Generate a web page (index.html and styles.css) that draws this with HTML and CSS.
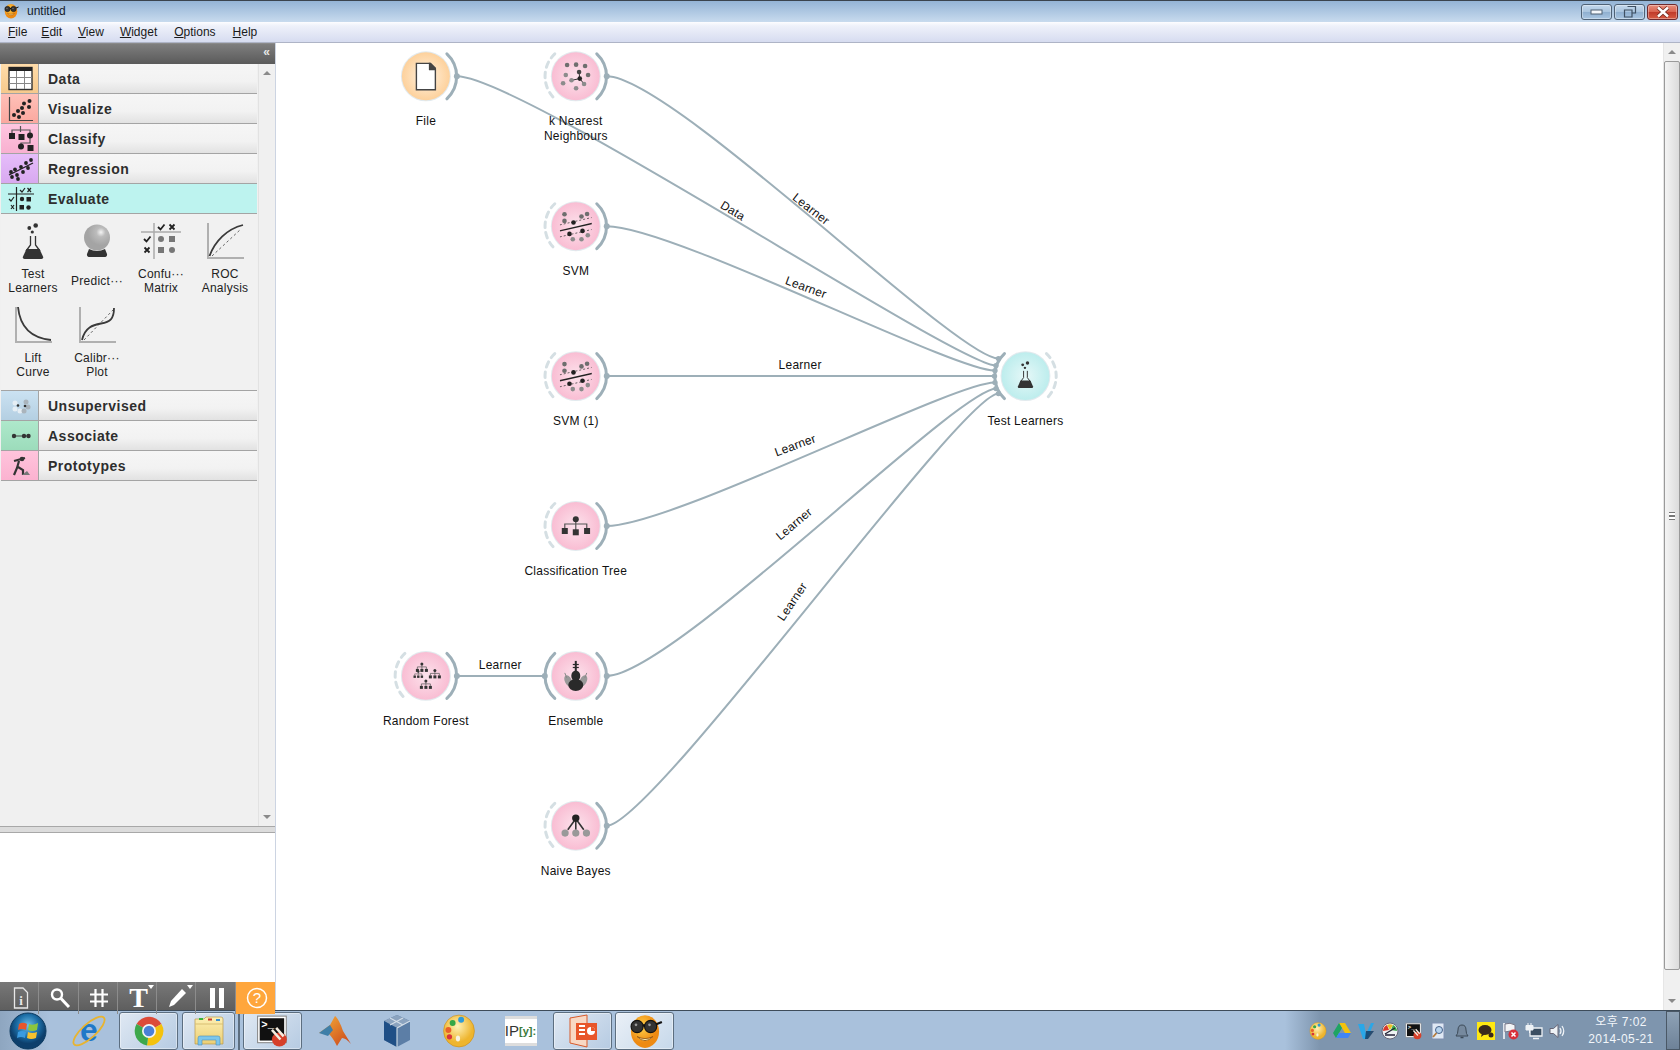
FILE: index.html
```html
<!DOCTYPE html>
<html>
<head>
<meta charset="utf-8" />
<title>untitled</title>
<link rel="stylesheet" href="styles.css">
</head>
<body>

<!-- shared gradients and glyphs -->
<svg class="defs" width="0" height="0">
	<defs>
		<radialGradient id="pink"><stop offset="0" stop-color="#fce3ec"/><stop offset="1" stop-color="#f9bdd3"/></radialGradient>
		<radialGradient id="peach"><stop offset="0" stop-color="#fff3e2"/><stop offset="1" stop-color="#fdd19c"/></radialGradient>
		<radialGradient id="teal"><stop offset="0" stop-color="#e6f8f8"/><stop offset="1" stop-color="#bdeded"/></radialGradient>
		<radialGradient id="ball" cx=".65" cy=".3"><stop offset="0" stop-color="#f4f4f4"/><stop offset=".35" stop-color="#bcbcbc"/><stop offset="1" stop-color="#a4a4a4"/></radialGradient>
		<radialGradient id="orb" cx=".5" cy=".35"><stop offset="0" stop-color="#6fc0ea"/><stop offset=".6" stop-color="#1c6fa8"/><stop offset="1" stop-color="#0d3f6c"/></radialGradient>
		<radialGradient id="sun" cx=".4" cy=".35"><stop offset="0" stop-color="#ffd24a"/><stop offset="1" stop-color="#ee8a12"/></radialGradient>
		<radialGradient id="cream" cx=".45" cy=".35"><stop offset="0" stop-color="#fff2b8"/><stop offset="1" stop-color="#eeb52e"/></radialGradient>
		<linearGradient id="folder" x1="0" y1="0" x2="0" y2="1"><stop offset="0" stop-color="#fdf0b4"/><stop offset="1" stop-color="#eccf74"/></linearGradient>
		<linearGradient id="peak" x1="0" y1="0" x2="1" y2="1"><stop offset="0" stop-color="#f6b33a"/><stop offset="1" stop-color="#c9421a"/></linearGradient>

		<path id="arc-out" d="M21 -22.5A30.8 30.8 0 0 1 21 22.5"/>
		<path id="arc-in" d="M-21 -22.5A30.8 30.8 0 0 0 -21 22.5"/>

		<symbol id="i-flask" viewBox="0 0 40 40">
			<circle cx="22.7" cy="2.5" r="2.3" fill="#333"/><circle cx="16.3" cy="5" r="1.9" fill="#333"/><circle cx="19.3" cy="9" r="1.6" fill="#333"/>
			<path d="M17.5 13V22L13 28M22.5 13V22L27 28" fill="none" stroke="#333" stroke-width="1.3"/>
			<path d="M13.5 26H26.500L30 33.500Q30.800 36 28.500 36H11.500Q9.200 36 10 33.500Z" fill="#333"/>
		</symbol>
		<symbol id="i-ball" viewBox="0 0 40 40">
			<circle cx="20" cy="14.500" r="13" fill="url(#ball)"/>
			<path d="M12 26Q20 30 28 26L30 31Q30.500 34 27 34H13Q9.500 34 10 31Z" fill="#333"/>
		</symbol>
		<symbol id="i-confusion" viewBox="0 0 42 40">
			<path d="M14 0V36M1 9H41" stroke="#aaa" stroke-width="1.500"/>
			<path d="M18 4L20.500 6.500L24.500 1.500M4 16L6.500 18.500L10.500 13.500" fill="none" stroke="#222" stroke-width="1.800"/>
			<path d="M29.500 1.500L34.500 6.500M34.500 1.500L29.500 6.500M4.500 24.500L9.500 29.500M9.500 24.500L4.500 29.500" stroke="#222" stroke-width="1.800"/>
			<circle cx="21" cy="16" r="3" fill="#777"/><rect x="29" y="13" width="6" height="6" fill="#777"/>
			<rect x="18" y="24" width="6" height="6" fill="#777"/><circle cx="32" cy="27" r="3" fill="#777"/>
		</symbol>
		<symbol id="i-roc" viewBox="0 0 40 40">
			<path d="M3 0V35H39" fill="none" stroke="#b0b0b0" stroke-width="2"/>
			<path d="M7 33L36 6" stroke="#666" stroke-dasharray="2.500 2.500"/>
			<path d="M4.500 33C10 18 22 6 38 2" fill="none" stroke="#3a3a3a" stroke-width="1.800"/>
		</symbol>
		<symbol id="i-lift" viewBox="0 0 40 40">
			<path d="M3 0V35H39" fill="none" stroke="#b0b0b0" stroke-width="2"/>
			<path d="M5 0C7 20 18 31 38 33" fill="none" stroke="#3a3a3a" stroke-width="1.800"/>
		</symbol>
		<symbol id="i-calib" viewBox="0 0 40 40">
			<path d="M3 0V35H39" fill="none" stroke="#b0b0b0" stroke-width="2"/>
			<path d="M7 33L36 3" stroke="#666" stroke-dasharray="2.500 2.500"/>
			<path d="M5 33C8 20 16 18 24 16.500C33 15 37 12 37 1" fill="none" stroke="#3a3a3a" stroke-width="1.800"/>
		</symbol>

		<symbol id="n-doc" viewBox="-16 -16 32 32">
			<path d="M-9.500 -13H4L9.500 -7.500V13.500H-9.500Z" fill="#fff" stroke="#444" stroke-width="1.400"/>
			<path d="M3 -13.500H5L10 -8.500V-6H3Z" fill="#444"/>
		</symbol>
		<symbol id="n-knn" viewBox="-16 -16 32 32">
			<path d="M4 2.300L3.300 -4.300M4 2.300L-4.300 4M4 2.300L8.300 7.700" stroke="#333"/>
			<g fill="#6e6e6e"><circle cx="-8.700" cy="-11.300" r="2.300"/><circle cx=".3" cy="-11.700" r="2.300"/><circle cx="9.300" cy="-10.300" r="2.300"/><circle cx="12.300" cy="-1.300" r="2.300"/></g>
			<g fill="#8c8c8c"><circle cx="-10" cy="-1.300" r="2.300"/><circle cx="-4.300" cy="4" r="2.300"/><circle cx="-12.700" cy="7" r="2.300"/><circle cx="8.300" cy="7.700" r="2.300"/><circle cx=".3" cy="12" r="2.300"/></g>
			<circle cx="3.300" cy="-4.300" r="2.300" fill="#444"/><circle cx="4" cy="2.300" r="2.300" fill="#222"/>
		</symbol>
		<symbol id="n-svm" viewBox="-16 -16 32 32">
			<path d="M-16 4.700L16.300 -2.700" stroke="#222" stroke-width="1.400"/>
			<path d="M-16 -1.300L16 -8.700M-16 10.700L16 3.300" stroke="#444" stroke-width=".8" stroke-dasharray="2 2"/>
			<g fill="#6e6e6e"><circle cx="-11.300" cy="-12" r="2.300"/><circle cx="-11.300" cy="-5.300" r="2.300"/><circle cx="5.700" cy="-9.700" r="2.300"/><circle cx="11.300" cy="-12.300" r="2.300"/></g>
			<g fill="#8c8c8c"><circle cx="-3" cy="13" r="2.300"/><circle cx="5.700" cy="13" r="2.300"/><circle cx="12" cy="9" r="2.300"/></g>
			<g fill="#222"><circle cx="-2.300" cy="-3.700" r="2.300"/><circle cx="6.700" cy="4.700" r="2.300"/><circle cx="-6.300" cy="7.700" r="2.300"/></g>
		</symbol>
		<symbol id="n-tree" viewBox="-16 -16 32 32">
			<path d="M0 -7V4M-11 3V-2H11V3" fill="none" stroke="#555" stroke-width="1.200"/>
			<circle cy="-6.700" r="3" fill="#333"/>
			<g fill="#333"><rect x="-14" y="2" width="6" height="6"/><rect x="-3" y="3.300" width="6" height="6"/><rect x="8.300" y="2" width="6" height="6"/></g>
		</symbol>
		<g id="minitree">
			<path d="M0 -4V1M-4.500 1V-1H4.500V1" fill="none" stroke="#555" stroke-width=".7"/>
			<circle cy="-4" r="1.500" fill="#333"/>
			<g fill="#333"><rect x="-6" y="1" width="3" height="3"/><rect x="-1.500" y="1" width="3" height="3"/><rect x="3" y="1" width="3" height="3"/></g>
		</g>
		<symbol id="n-forest" viewBox="-16 -16 32 32">
			<use href="#minitree" x="-4" y="-8"/><use href="#minitree" x="9" y="-1.500"/><use href="#minitree" x="0" y="9"/><use href="#minitree" x="-9.500" y="-1.500" transform="scale(.8)"/>
		</symbol>
		<symbol id="n-violin" viewBox="-16 -16 32 32">
			<g fill="#999"><ellipse cx="-7.500" cy="5" rx="3.500" ry="6" transform="rotate(-25 -7.500 5)"/><ellipse cx="7.500" cy="5" rx="3.500" ry="6" transform="rotate(25 7.500 5)"/></g>
			<path d="M-11 -3L-9 2M11 -3L9 2" stroke="#888"/>
			<g fill="#2a2a2a"><rect x="-1" y="-15" width="2" height="14"/><rect x="-3" y="-12" width="6" height="1.200"/><rect x="-3" y="-9" width="6" height="1.200"/>
			<ellipse cy="0" rx="4.500" ry="5.500"/><ellipse cy="9" rx="7.500" ry="6"/></g>
		</symbol>
		<symbol id="n-bayes" viewBox="-16 -16 32 32">
			<path d="M0 -7L-8 4M0 -7V4M0 -7L8 4" stroke="#333" stroke-width="1.600"/>
			<circle cy="-7.700" r="3.700" fill="#222"/>
			<g fill="#999"><circle cx="-10.700" cy="7.300" r="3.600"/><circle cy="7.300" r="3.600"/><circle cx="10.700" cy="7.300" r="3.600"/></g>
		</symbol>

		<symbol id="t-palette" viewBox="0 0 32 32">
			<ellipse cx="16" cy="16" rx="14.500" ry="15" fill="url(#cream)" stroke="#c98d1c" stroke-width=".6"/>
			<circle cx="18" cy="5.500" r="2.800" fill="#2f9bd8"/><circle cx="10" cy="8.500" r="2.800" fill="#35a846"/><circle cx="6" cy="15" r="2.800" fill="#e8622a"/><circle cx="7" cy="21.500" r="2.500" fill="#d8323a"/>
			<ellipse cx="15" cy="23" rx="2" ry="2.800" fill="#f7f2df"/>
		</symbol>
		<symbol id="t-term" viewBox="0 0 32 32">
			<rect x="1.500" y="2" width="27" height="25" fill="#fff" stroke="#888"/>
			<rect x="3.500" y="4" width="23" height="21" fill="#111"/>
			<text class="term-text" x="5" y="13">&gt;_</text>
			<ellipse cx="22" cy="24" rx="7" ry="6.500" fill="#d6402a"/>
			<path d="M15 15L23 24M19 13L26 21" stroke="#f3ece0" stroke-width="2.400"/>
		</symbol>
		<symbol id="t-smile" viewBox="0 0 32 32">
			<ellipse cx="16" cy="16.500" rx="12.500" ry="14.500" fill="url(#sun)"/>
			<path d="M9 21Q16 28 23 21Q16 24.500 9 21Z" fill="#fff2b8" stroke="#8a4a08" stroke-width=".7"/>
			<circle cx="9" cy="12" r="5.400" fill="#333" stroke="#111"/><circle cx="21" cy="12" r="5.400" fill="#333" stroke="#111"/>
			<path d="M14 11H16M26 10L31 8" stroke="#111" stroke-width="2"/>
			<circle cx="8" cy="10.500" r="1.200" fill="#999"/><circle cx="20" cy="10.500" r="1.200" fill="#999"/>
		</symbol>
	</defs>
</svg>

<div class="titlebar">
	<svg class="app-icon" width="16" height="16"><use href="#t-smile"/></svg>
	<span class="title">untitled</span>
	<div class="win-buttons">
		<div class="win-btn"><svg width="14" height="10"><rect x="1" y="3" width="11" height="4" fill="#f4f7fb" stroke="#4f6072"/></svg></div>
		<div class="win-btn"><svg width="14" height="12"><path d="M4.500 .5H12.500V7H9.500M1.500 4H9V11H1.500Z" fill="none" stroke="#3f5062" stroke-width="1.200"/></svg></div>
		<div class="win-btn close"><svg width="16" height="12"><path d="M3 1.500L13 10.500M13 1.500L3 10.500" stroke="#6e2a22" stroke-width="4"/><path d="M3 1.500L13 10.500M13 1.500L3 10.500" stroke="#fff" stroke-width="2.400"/></svg></div>
	</div>
</div>

<div class="menubar">
	<span class="menu m-file"><u>F</u>ile</span>
	<span class="menu"><u>E</u>dit</span>
	<span class="menu"><u>V</u>iew</span>
	<span class="menu m-wide"><u>W</u>idget</span>
	<span class="menu m-wide"><u>O</u>ptions</span>
	<span class="menu"><u>H</u>elp</span>
</div>

<div class="main">
	<div class="dock">
		<div class="dock-head">&laquo;</div>
		<div class="toolbox">
			<div class="toolbox-list">
				<div class="cat">
					<div class="swatch s-data"><svg width="37" height="29"><rect x="8" y="3.500" width="23" height="22" fill="#fff" stroke="#333" stroke-width="1.400"/><rect x="8" y="3" width="23" height="4" fill="#222"/><path d="M8 13.500H31M8 19.500H31M15.500 7V25M23.500 7V25" stroke="#888"/></svg></div>
					<span class="cat-name">Data</span>
				</div>
				<div class="cat">
					<div class="swatch s-vis"><svg width="37" height="29"><path d="M8.500 3V26.500H32" fill="none" stroke="#444" stroke-width="1.200"/><g fill="#222"><circle cx="28.500" cy="7" r="2"/><circle cx="23" cy="9.500" r="2"/><circle cx="28" cy="13" r="2"/><circle cx="21" cy="14" r="2"/><circle cx="17" cy="17" r="2"/><circle cx="22" cy="19" r="2"/><circle cx="13" cy="21" r="2"/><circle cx="18" cy="23" r="2"/></g></svg></div>
					<span class="cat-name">Visualize</span>
				</div>
				<div class="cat">
					<div class="swatch s-class"><svg width="37" height="29"><path d="M19.500 2V8M11 10V6H29V10M29 14V19H20V22" fill="none" stroke="#555" stroke-width="1.200"/><g fill="#222"><rect x="8" y="9" width="6" height="6"/><rect x="17.500" y="10" width="6" height="6"/><circle cx="29" cy="11.500" r="3"/><circle cx="20" cy="22.500" r="3"/><rect x="26.500" y="21" width="6" height="6"/></g></svg></div>
					<span class="cat-name">Classify</span>
				</div>
				<div class="cat">
					<div class="swatch s-reg"><svg width="37" height="29"><path d="M8 21L32 9" stroke="#222" stroke-width="1.300"/><g fill="#222"><circle cx="10" cy="18" r="1.900"/><circle cx="14" cy="15.500" r="1.900"/><circle cx="11" cy="23" r="1.900"/><circle cx="16" cy="21" r="1.900"/><circle cx="17" cy="25" r="1.900"/><circle cx="20" cy="13" r="1.900"/><circle cx="22" cy="18" r="1.900"/><circle cx="25" cy="9" r="1.900"/><circle cx="27" cy="14" r="1.900"/><circle cx="30" cy="6" r="1.900"/></g></svg></div>
					<span class="cat-name">Regression</span>
				</div>
				<div class="cat active">
					<div class="swatch"><svg width="37" height="29"><path d="M15.500 3V27M7 10H33" stroke="#222" stroke-width="1.200"/><path d="M19 6L21 8L24 4M8 15L10 17L13 13" fill="none" stroke="#222" stroke-width="1.200"/><path d="M26.500 4L30 8M30 4L26.500 8M10 21L13 25M13 21L10 25" stroke="#222" stroke-width="1.200"/><g fill="#222"><circle cx="21" cy="15" r="2.200"/><rect x="25.500" y="13" width="4.500" height="4.500"/><rect x="18.500" y="21" width="4.500" height="4.500"/><circle cx="27.500" cy="23.500" r="2.200"/></g></svg></div>
					<span class="cat-name">Evaluate</span>
				</div>

				<div class="widgets">
					<div class="widget"><svg class="w-icon" width="40" height="40"><use href="#i-flask"/></svg><div class="w-label">Test<br>Learners</div></div>
					<div class="widget"><svg class="w-icon" width="40" height="40"><use href="#i-ball"/></svg><div class="w-label">Predict&middot;&middot;&middot;</div></div>
					<div class="widget"><svg class="w-icon" width="42" height="40"><use href="#i-confusion"/></svg><div class="w-label">Confu&middot;&middot;&middot;<br>Matrix</div></div>
					<div class="widget"><svg class="w-icon" width="40" height="40"><use href="#i-roc"/></svg><div class="w-label">ROC<br>Analysis</div></div>
					<div class="widget"><svg class="w-icon" width="40" height="40"><use href="#i-lift"/></svg><div class="w-label">Lift<br>Curve</div></div>
					<div class="widget"><svg class="w-icon" width="40" height="40"><use href="#i-calib"/></svg><div class="w-label">Calibr&middot;&middot;&middot;<br>Plot</div></div>
				</div>

				<div class="cat">
					<div class="swatch s-uns"><svg width="37" height="29"><g fill="#e6eef4"><circle cx="14" cy="12" r="2.500"/><circle cx="14" cy="18" r="2.500"/><circle cx="19" cy="20" r="2.500"/></g><g fill="#aab4bc"><circle cx="25" cy="11" r="2.500"/><circle cx="27" cy="16" r="2.500"/><circle cx="23" cy="20" r="2.500"/></g><g fill="#333"><circle cx="17" cy="14.500" r="1.300"/><circle cx="24" cy="15" r="1.300"/></g></svg></div>
					<span class="cat-name">Unsupervised</span>
				</div>
				<div class="cat">
					<div class="swatch s-ass"><svg width="37" height="29"><path d="M12 15H28" stroke="#444"/><g fill="#333"><circle cx="13" cy="15" r="2.200"/><circle cx="23" cy="15" r="2.200"/><circle cx="27.500" cy="15" r="2.200"/></g></svg></div>
					<span class="cat-name">Associate</span>
				</div>
				<div class="cat">
					<div class="swatch s-proto"><svg width="37" height="29"><circle cx="21" cy="8" r="2.300" fill="#333"/><path d="M13 10L24 7M18 10L16 17L13 24M17 16L22 19V24" fill="none" stroke="#333" stroke-width="2.200"/><path d="M21 24H29L26 20Z" fill="#777"/></svg></div>
					<span class="cat-name">Prototypes</span>
				</div>
			</div>
			<div class="scroll side">
				<span class="arrow up"></span>
				<span class="arrow down"></span>
			</div>
		</div>
		<div class="splitter"></div>
		<div class="description"></div>
		<div class="dock-tools">
			<div class="tool"><svg width="20" height="24"><path d="M3.500 2H12L16.500 6.500V22H3.500Z" fill="none" stroke="#e8e8e8" stroke-width="1.300"/><text class="tool-i" x="10" y="19">i</text></svg></div>
			<div class="tool"><svg width="24" height="24"><circle cx="9" cy="8.500" r="5" fill="none" stroke="#fff" stroke-width="2.400"/><path d="M13 12.500L21 21" stroke="#fff" stroke-width="3"/></svg></div>
			<div class="tool"><svg width="22" height="24"><path d="M7.500 3V21M14.500 3V21M2 8.500H20M2 15.500H20" stroke="#fff" stroke-width="2.200"/></svg></div>
			<div class="tool tool-t">T<span class="drop"></span></div>
			<div class="tool"><svg width="24" height="24"><path d="M16 3L20 7L8 19L3 21L5 15Z" fill="#fff"/></svg><span class="drop"></span></div>
			<div class="tool"><svg width="20" height="24"><rect x="3" y="2" width="5" height="20" fill="#fff"/><rect x="12" y="2" width="5" height="20" fill="#fff"/></svg></div>
			<div class="tool help"><svg width="24" height="24"><circle cx="12" cy="12" r="9.500" fill="none" stroke="#fff" stroke-width="1.500"/><text class="tool-q" x="12" y="17">?</text></svg></div>
		</div>
	</div>

	<div class="canvas">
		<svg class="scheme" viewBox="276 43 1388 967">
			<g transform="translate(0 .5)">
			<!-- links -->
			<g class="link">
				<path d="M457 75.500C522 75.500 957 365 997 365"/>
				<path d="M607 75.500C672 75.500 957 358 999 358"/>
				<path d="M607 225.500C672 225.500 953 370 995 370"/>
				<path d="M607 375.500H995"/>
				<path d="M607 525.500C672 525.500 953 382 995 382"/>
				<path d="M607 675.500C672 675.500 957 388 997 388"/>
				<path d="M607 825.500C652 825.500 962 393 999 393"/>
				<path d="M457 675.500H545"/>
			</g>

			<!-- nodes -->
			<g transform="translate(426 75.500)">
				<circle class="halo" r="25"/><circle r="24" fill="url(#peach)"/>
				<use class="arc" href="#arc-out"/><circle class="anchor" cx="31" r="3"/>
				<use href="#n-doc" x="-16" y="-16" width="32" height="32"/>
				<text class="label" y="49">File</text>
			</g>
			<g transform="translate(576 75.500)">
				<circle class="halo" r="25"/><circle r="24" fill="url(#pink)"/>
				<use class="arc-off" href="#arc-in"/><use class="arc" href="#arc-out"/><circle class="anchor" cx="31" r="3"/>
				<use href="#n-knn" x="-16" y="-16" width="32" height="32"/>
				<text class="label" y="49">k Nearest</text><text class="label" y="64">Neighbours</text>
			</g>
			<g transform="translate(576 225.500)">
				<circle class="halo" r="25"/><circle r="24" fill="url(#pink)"/>
				<use class="arc-off" href="#arc-in"/><use class="arc" href="#arc-out"/><circle class="anchor" cx="31" r="3"/>
				<use href="#n-svm" x="-16" y="-16" width="32" height="32"/>
				<text class="label" y="49">SVM</text>
			</g>
			<g transform="translate(576 375.500)">
				<circle class="halo" r="25"/><circle r="24" fill="url(#pink)"/>
				<use class="arc-off" href="#arc-in"/><use class="arc" href="#arc-out"/><circle class="anchor" cx="31" r="3"/>
				<use href="#n-svm" x="-16" y="-16" width="32" height="32"/>
				<text class="label" y="49">SVM (1)</text>
			</g>
			<g transform="translate(576 525.500)">
				<circle class="halo" r="25"/><circle r="24" fill="url(#pink)"/>
				<use class="arc-off" href="#arc-in"/><use class="arc" href="#arc-out"/><circle class="anchor" cx="31" r="3"/>
				<use href="#n-tree" x="-16" y="-16" width="32" height="32"/>
				<text class="label" y="49">Classification Tree</text>
			</g>
			<g transform="translate(426 675.500)">
				<circle class="halo" r="25"/><circle r="24" fill="url(#pink)"/>
				<use class="arc-off" href="#arc-in"/><use class="arc" href="#arc-out"/><circle class="anchor" cx="31" r="3"/>
				<use href="#n-forest" x="-16" y="-16" width="32" height="32"/>
				<text class="label" y="49">Random Forest</text>
			</g>
			<g transform="translate(576 675.500)">
				<circle class="halo" r="25"/><circle r="24" fill="url(#pink)"/>
				<use class="arc" href="#arc-in"/><circle class="anchor" cx="-31" r="3"/><use class="arc" href="#arc-out"/><circle class="anchor" cx="31" r="3"/>
				<use href="#n-violin" x="-16" y="-16" width="32" height="32"/>
				<text class="label" y="49">Ensemble</text>
			</g>
			<g transform="translate(576 825.500)">
				<circle class="halo" r="25"/><circle r="24" fill="url(#pink)"/>
				<use class="arc-off" href="#arc-in"/><use class="arc" href="#arc-out"/><circle class="anchor" cx="31" r="3"/>
				<use href="#n-bayes" x="-16" y="-16" width="32" height="32"/>
				<text class="label" y="49">Naive Bayes</text>
			</g>
			<g transform="translate(1026 375.500)">
				<circle class="halo" r="25"/><circle r="24" fill="url(#teal)"/>
				<use class="arc" href="#arc-in"/><use class="arc-off" href="#arc-out"/>
				<g class="anchor"><circle cx="-27" cy="-17.500" r="2.700"/><circle cx="-29.500" cy="-10.500" r="2.700"/><circle cx="-30.500" cy="-5.500" r="2.700"/><circle cx="-31" r="2.700"/><circle cx="-30.500" cy="6.500" r="2.700"/><circle cx="-29.500" cy="12.500" r="2.700"/><circle cx="-27" cy="17.500" r="2.700"/></g>
				<use href="#i-flask" x="-15" y="-15" width="30" height="30"/>
				<text class="label" y="49">Test Learners</text>
			</g>
			</g>

			<g class="link-text">
				<text transform="translate(731 214) rotate(31)">Data</text>
				<text transform="translate(809 212) rotate(38)">Learner</text>
				<text transform="translate(805 291) rotate(20)">Learner</text>
				<text x="800.500" y="369">Learner</text>
				<text transform="translate(797 449) rotate(-20)">Learner</text>
				<text transform="translate(797 527) rotate(-40)">Learner</text>
				<text transform="translate(796 604) rotate(-56)">Learner</text>
				<text x="500.500" y="669">Learner</text>
			</g>
		</svg>
		<div class="scroll main-scroll">
			<span class="arrow up"></span>
			<div class="thumb"><span class="grip"></span></div>
			<span class="arrow down"></span>
		</div>
	</div>
</div>

<div class="taskbar">
	<div class="start">
		<svg width="38" height="38" viewBox="0 0 38 38">
			<circle cx="19" cy="19" r="18" fill="url(#orb)" stroke="#0c3a60"/>
			<path d="M10 12Q14 9.500 18 12L17 18Q13 16 9 18Z" fill="#e8562a"/>
			<path d="M20 12Q24 14 29 11L28 18Q23 20 19 18Z" fill="#8cc63e"/>
			<path d="M9 20Q13 18 17 20L16 26Q12 24 8 26Z" fill="#3a9be0"/>
			<path d="M19 20Q23 22 28 20L27 26Q22 28 18 26Z" fill="#f6c12e"/>
		</svg>
	</div>
	<div class="task ie">
		<svg width="40" height="38" viewBox="0 0 40 38">
			<text class="ie-e" x="20" y="29">e</text>
			<ellipse cx="20" cy="19" rx="20" ry="7" transform="rotate(-42 20 19)" fill="none" stroke="#e8b430" stroke-width="1.800"/>
		</svg>
	</div>
	<div class="task on">
		<svg width="32" height="32" viewBox="0 0 32 32">
			<path d="M16 16L3.500 9A14.500 14.500 0 0 1 28.500 9Z" fill="#dd4b39"/>
			<path d="M16 16L28.500 9A14.500 14.500 0 0 1 14 30.400Z" fill="#f4c20d"/>
			<path d="M16 16L14 30.400A14.500 14.500 0 0 1 3.500 9Z" fill="#3da84c"/>
			<circle cx="16" cy="16" r="7" fill="#f4f4f4"/><circle cx="16" cy="16" r="5.300" fill="#4a80d8"/>
		</svg>
	</div>
	<div class="task on wide-folder">
		<svg width="34" height="34" viewBox="0 0 34 34">
			<path d="M3 5H12L14 3H29Q31 3 31 5V30H3Z" fill="url(#folder)" stroke="#b99a4a" stroke-width=".7"/>
			<rect x="7" y="4" width="4" height="2" fill="#3ab53a"/><rect x="16" y="4.500" width="4" height="2" fill="#c83a2a"/><rect x="24" y="5" width="4" height="2" fill="#3a90d0"/>
			<path d="M3 10H31" stroke="#d8bf72"/>
			<path d="M6 31V24Q6 22 8 22H26Q28 22 28 24V31H24V26H10V31Z" fill="#7cc6ec" stroke="#4a8fb8" stroke-width=".6"/>
		</svg>
	</div>
	<div class="task-sep"></div>
	<div class="task on"><svg width="34" height="34"><use href="#t-term"/></svg></div>
	<div class="task-group">
		<div class="task">
			<svg width="34" height="34" viewBox="0 0 34 34">
				<path d="M1 19L12 11L17 2Q21 5 25 17L33 30Q28 24 24 24L19 32Q15 24 11 20Z" fill="url(#peak)"/>
				<path d="M1 19L12 11L15 16L10 22Z" fill="#3f7fa8"/>
			</svg>
		</div>
		<div class="task">
			<svg width="32" height="36" viewBox="0 0 32 36">
				<path d="M16 2L29 8V27L16 34L3 27V8Z" fill="#5c7ea6"/>
				<path d="M16 2L29 8L16 15L3 8Z" fill="#8ba3bf"/>
				<path d="M3 8L16 15V34L3 27Z" fill="#1f4f86"/>
				<path d="M16 15L29 8M16 15V34M9 5L22 12M22 5L9 12" stroke="#d4dee8" stroke-width="1.100" fill="none"/>
			</svg>
		</div>
		<div class="task"><svg width="34" height="34"><use href="#t-palette"/></svg></div>
		<div class="task">
			<div class="ipy"><span>IP</span><span class="ipy-y">[y]:</span></div>
		</div>
		<div class="task on">
			<svg width="34" height="34" viewBox="0 0 34 34">
				<path d="M4 4L21 1V33L4 29Z" fill="#f8d8c4" stroke="#d85a2a"/>
				<rect x="10" y="9" width="21" height="17" fill="#e8562a"/>
				<path d="M13 12H19M13 16H19M13 20H19" stroke="#fff" stroke-width="2"/>
				<circle cx="25" cy="17" r="4" fill="#fff"/><path d="M25 17V13A4 4 0 0 1 29 17Z" fill="#e8562a"/>
			</svg>
		</div>
		<div class="task on last"><svg width="36" height="36"><use href="#t-smile"/></svg></div>
	</div>

	<div class="tray">
		<svg class="tray-icon" width="18" height="18"><use href="#t-palette"/></svg>
		<svg class="tray-icon" width="18" height="18" viewBox="0 0 18 18"><path d="M6 1H12L18 11H12Z" fill="#f4c20d"/><path d="M6 1L0 11L3 16L9 6Z" fill="#1fa463"/><path d="M3 16H15L18 11H6Z" fill="#4285f4"/></svg>
		<svg class="tray-icon" width="18" height="18" viewBox="0 0 18 18"><path d="M1 2L7 2L9 12L14 1H17L10 17H6Z" fill="#2aa7e8"/><path d="M9 9H17L11 17H8Z" fill="#123a60" opacity=".8"/></svg>
		<svg class="tray-icon" width="18" height="18" viewBox="0 0 18 18"><circle cx="9" cy="9" r="8" fill="#eef2f4" stroke="#667"/><path d="M2 9A7 7 0 0 1 6 3L8 8Z" fill="#d8392a"/><path d="M6 3A7 7 0 0 1 12 3L9 8Z" fill="#ecc22a"/><path d="M12 3A7 7 0 0 1 16 9L10 8Z" fill="#3aa54a"/><path d="M4 12L14 6" stroke="#223" stroke-width="1.300"/><path d="M4 13H14" stroke="#556" stroke-width="2"/></svg>
		<svg class="tray-icon" width="18" height="18"><use href="#t-term"/></svg>
		<svg class="tray-icon" width="18" height="18" viewBox="0 0 18 18"><path d="M3 1H15V17H3Z" fill="#dfe8f4" stroke="#7e8fb0"/><circle cx="10" cy="8" r="3.500" fill="#b8d4ee" stroke="#46628a"/><path d="M7.500 11L4 15" stroke="#b57a3a" stroke-width="1.800"/></svg>
		<svg class="tray-icon" width="18" height="18" viewBox="0 0 18 18"><path d="M3 14Q5 12 5 8Q5 3 9 3Q13 3 13 8Q13 12 15 14Z" fill="#76899e" stroke="#3c4a58"/><path d="M7.500 15.500H10.500" stroke="#3c4a58" stroke-width="1.500"/></svg>
		<svg class="tray-icon" width="18" height="18" viewBox="0 0 18 18"><rect width="18" height="18" fill="#ffe812"/><ellipse cx="8" cy="8" rx="6.500" ry="5" fill="#3a2a1c"/><path d="M5 11L4 15L8 12Z" fill="#3a2a1c"/><circle cx="14" cy="13" r="2.500" fill="#3a2a1c"/></svg>
		<svg class="tray-icon" width="18" height="18" viewBox="0 0 18 18"><path d="M3 1V17" stroke="#fff" stroke-width="1.500"/><path d="M4 2Q9 0 14 3V10Q9 8 4 10Z" fill="#f2f4f6" stroke="#778"/><circle cx="12.500" cy="12.500" r="5" fill="#d8303a"/><path d="M10.500 10.500L14.500 14.500M14.500 10.500L10.500 14.500" stroke="#fff" stroke-width="1.500"/></svg>
		<svg class="tray-icon" width="18" height="18" viewBox="0 0 18 18"><path d="M5 6H17V14H5Z" fill="#3a4e62" stroke="#eef2f6" stroke-width="1.300"/><path d="M8 16.500H14" stroke="#eef2f6" stroke-width="1.500"/><path d="M1 3.500H8V8H1ZM3 3.500V1M6 3.500V1M4.500 8V11" fill="#eef2f6" stroke="#eef2f6"/></svg>
		<svg class="tray-icon" width="18" height="18" viewBox="0 0 18 18"><path d="M1 6.500H4.500L9 2.500V15.500L4.500 11.500H1Z" fill="#eef2f6" stroke="#667"/><path d="M11 6Q13 9 11 12M13 4Q16.500 9 13 14" fill="none" stroke="#eef2f6" stroke-width="1.300"/></svg>
	</div>
	<div class="clock"><span>오후 7:02</span><span>2014-05-21</span></div>
	<div class="show-desktop"></div>
</div>

</body>
</html>
```

FILE: styles.css
```css
html, body {
	margin: 0;
	height: 100%;
	overflow: hidden;
}
body {
	display: flex;
	flex-direction: column;
	width: 1680px;
	height: 1050px;
	font-family: "Liberation Sans", Arial, sans-serif;
	font-size: 12px;
	color: #111;
	background: #fff;
}
.defs {
	position: absolute;
}
svg {
	display: block;
	flex: none;
}

/* window chrome */
.titlebar {
	display: flex;
	align-items: center;
	height: 21px;
	border-top: 1px solid #3a444e;
	background: linear-gradient(#94b4d6, #c8dbee);
}
.app-icon {
	margin-left: 3px;
	margin-bottom: 2px;
}
.title {
	margin-left: 8px;
	margin-bottom: 2px;
	font-size: 12px;
	color: #14202c;
}
.win-buttons {
	display: flex;
	gap: 2px;
	margin-left: auto;
	margin-right: 2px;
}
.win-btn {
	display: flex;
	align-items: center;
	justify-content: center;
	width: 29px;
	height: 14px;
	border: 1px solid #4f6276;
	border-radius: 3px;
	background: linear-gradient(#c4d8ec 0, #a9c4de 50%, #8fafcf 51%, #a9c6e2 100%);
	box-shadow: inset 0 0 0 1px rgba(255,255,255,.35);
}
.win-btn.close {
	border-color: #6e2a2e;
	background: linear-gradient(#e88f7e 0, #d8624e 50%, #bf3a2a 51%, #d65a42 100%);
}

.menubar {
	display: flex;
	align-items: center;
	height: 20px;
	border-bottom: 1px solid #aeb4c6;
	background: linear-gradient(#fdfdff 0, #eef1fa 20%, #d6dcf0 100%);
}
.menu {
	padding: 0 8px;
	color: #1a1a1a;
}
.m-file {
	padding-right: 6px;
}
.m-wide {
	padding-right: 9px;
}

.main {
	display: flex;
	flex: 1;
	min-height: 0;
}

/* left dock */
.dock {
	display: flex;
	flex-direction: column;
	flex: none;
	width: 275px;
	border-right: 1px solid #ccd4e2;
	background: #f0f0f0;
}
.dock-head {
	flex: none;
	height: 21px;
	padding-right: 5px;
	box-sizing: border-box;
	border-top: 1px solid #8a8a8a;
	background: linear-gradient(#7e7e7e, #5a5a5a);
	color: #e8e8e8;
	font-size: 12px;
	font-weight: bold;
	line-height: 17px;
	text-align: right;
}
.toolbox {
	display: flex;
	flex: 1;
	min-height: 0;
}
.toolbox-list {
	width: 257px;
	flex: none;
	box-sizing: border-box;
	padding-left: 1px;
	background: #f0f0f0;
}
.cat {
	display: flex;
	align-items: stretch;
	height: 29px;
	border-bottom: 1px solid #a4a4a4;
	background: linear-gradient(#f6f6f6 0, #f2f2f2 60%, #e2e2e2 100%);
}
.cat.active {
	background: #bdf3ef;
}
.swatch {
	width: 37px;
	flex: none;
	border-right: 1px solid #a4a4a4;
}
.cat.active .swatch {
	border-right: 0;
	width: 38px;
}
.s-data { background: linear-gradient(#ffdcaa, #f6c98c); }
.s-vis { background: linear-gradient(#ffc0b8, #fba89f); }
.s-class { background: linear-gradient(#ffc6e0, #f8b0d0); }
.s-reg { background: linear-gradient(#e6bdfa, #d8a9f0); }
.s-uns { background: linear-gradient(#cbe2f2, #b4cfe2); }
.s-ass { background: linear-gradient(#aee8cb, #9cdcbb); }
.s-proto { background: linear-gradient(#ffc4dc, #fbb2d0); }
.cat-name {
	margin-left: 9px;
	font-size: 14px;
	font-weight: bold;
	letter-spacing: .5px;
	line-height: 31px;
	color: #2e2e2e;
}

.widgets {
	display: grid;
	grid-template-columns: repeat(4, 64px);
	grid-auto-rows: 84px;
	height: 167px;
	padding-top: 9px;
	border-bottom: 1px solid #a4a4a4;
	background: #f1f1f1;
}
.widget {
	display: flex;
	flex-direction: column;
	align-items: center;
}
.w-icon {
	margin-bottom: 4px;
}
.w-label {
	display: flex;
	align-items: center;
	height: 28px;
	font-size: 12px;
	letter-spacing: .25px;
	line-height: 14px;
	text-align: center;
	color: #222;
}

.scroll {
	position: relative;
	flex: none;
	width: 16px;
	background: #f0f0f0;
}
.side {
	margin-left: 1px;
	border-left: 1px solid #e2e2e2;
}
.arrow {
	position: absolute;
	left: 4px;
	width: 0;
	height: 0;
	border-left: 4px solid transparent;
	border-right: 4px solid transparent;
}
.arrow.up {
	top: 7px;
	border-bottom: 4px solid #8a8a8a;
}
.arrow.down {
	bottom: 7px;
	border-top: 4px solid #8a8a8a;
}

.splitter {
	flex: none;
	height: 5px;
	border-top: 1px solid #a8a8a8;
	border-bottom: 1px solid #a8a8a8;
	background: #dcdcdc;
}
.description {
	flex: none;
	height: 149px;
	background: #fff;
}
.dock-tools {
	display: grid;
	grid-template-columns: repeat(7, 1fr);
	flex: none;
	height: 28px;
	background: linear-gradient(#787878, #5e5e5e);
}
.tool {
	position: relative;
	display: flex;
	align-items: center;
	justify-content: center;
	padding-left: 3px;
	border-right: 1px solid #8c8c8c;
	color: #fff;
}
.tool-t {
	font-family: "Liberation Serif", serif;
	font-size: 28px;
	font-weight: bold;
}
.tool-i {
	font-family: "Liberation Serif", serif;
	font-size: 13px;
	font-weight: bold;
	text-anchor: middle;
	fill: #e8e8e8;
}
.tool-q {
	font-size: 15px;
	text-anchor: middle;
	fill: #fff;
}
.drop {
	position: absolute;
	top: 3px;
	right: 2px;
	border-left: 3px solid transparent;
	border-right: 3px solid transparent;
	border-top: 4px solid #fff;
}
.tool.help {
	border-right: 0;
	background: #ffa63c;
}

/* scheme canvas */
.canvas {
	display: flex;
	flex: 1;
	min-width: 0;
	background: #fff;
}
.scheme {
	flex: 1;
	width: 1388px;
	height: 967px;
}
.main-scroll {
	display: flex;
	border-left: 1px solid #e6e6e6;
}
.thumb {
	position: absolute;
	top: 18px;
	bottom: 40px;
	left: 0;
	right: 0;
	display: flex;
	align-items: center;
	justify-content: center;
	border: 1px solid #9a9a9a;
	border-radius: 2px;
	background: linear-gradient(90deg, #f4f4f4, #dcdcdc);
}
.grip {
	width: 6px;
	height: 6px;
	border-top: 1px solid #777;
	border-bottom: 1px solid #777;
	background: linear-gradient(#fff 40%, #777 40%, #777 60%, #fff 60%);
}

.link path {
	fill: none;
	stroke: #9dafb8;
	stroke-width: 2;
}
.link-text text,
.label {
	font-family: "Liberation Sans", Arial, sans-serif;
	font-size: 12px;
	letter-spacing: .25px;
	text-anchor: middle;
	fill: #111;
}
.halo {
	fill: #e2eaee;
}
.arc {
	fill: none;
	stroke: #9dafb8;
	stroke-width: 3;
	stroke-linecap: round;
}
.arc-off {
	fill: none;
	stroke: #d5dfe3;
	stroke-width: 3;
	stroke-dasharray: 5.500 5;
	stroke-linecap: round;
}
.anchor {
	fill: #9dafb8;
}

/* windows taskbar */
.taskbar {
	display: flex;
	align-items: center;
	flex: none;
	height: 39px;
	border-top: 1px solid #3e4c5a;
	background: linear-gradient(90deg, #8ea6c0 0, #a9c1dc 50px, #a9c1dc 1285px, #7e95ae 1320px);
}
.start {
	display: flex;
	justify-content: center;
	align-items: center;
	box-sizing: border-box;
	width: 58px;
	padding-right: 2px;
}
.task {
	display: flex;
	align-items: center;
	justify-content: center;
	box-sizing: border-box;
	width: 59px;
	height: 38px;
	flex: none;
}
.task.on {
	border: 1px solid #5c6e80;
	border-radius: 3px;
	background: linear-gradient(135deg, #dfe8f3, #b6cbe2);
	box-shadow: inset 0 0 0 1px rgba(255,255,255,.4);
}
.ie {
	width: 61px;
}
.wide-folder {
	width: 53px;
	margin-left: 4px;
}
.task-sep {
	width: 2px;
	height: 38px;
	margin: 0 3px;
	background: #5c6e80;
}
.task-group {
	display: flex;
	gap: 3px;
	margin-left: 3px;
}
.last {
	background: linear-gradient(135deg, #eaf0f7, #c6d8ea) !important;
}
.ie-e {
	font-family: "Liberation Sans", Arial, sans-serif;
	font-size: 32px;
	font-weight: bold;
	text-anchor: middle;
	fill: #1f78c8;
}
.term-text {
	font-family: "Liberation Mono", monospace;
	font-size: 10px;
	font-weight: bold;
	fill: #fff;
}
.ipy {
	display: flex;
	align-items: center;
	justify-content: center;
	width: 32px;
	height: 30px;
	box-sizing: border-box;
	border-top: 3px solid #ddd;
	border-bottom: 3px solid #ddd;
	background: #fff;
	font-size: 15px;
	color: #333;
}
.ipy-y {
	font-size: 11px;
	font-weight: bold;
	color: #3a7a3a;
}

.tray {
	display: flex;
	gap: 6px;
	margin-left: auto;
	align-items: center;
}
.clock {
	display: flex;
	flex-direction: column;
	align-items: center;
	width: 68px;
	margin: 0 11px 0 20px;
	font-family: "Liberation Sans", "Noto Sans CJK KR", sans-serif;
	font-size: 12px;
	letter-spacing: .4px;
	line-height: 17px;
	color: #f2f6fa;
}
.show-desktop {
	box-sizing: border-box;
	width: 14px;
	height: 39px;
	border: 1px solid #4a5866;
	background: linear-gradient(#8ea2b6, #6e8298);
}
```
